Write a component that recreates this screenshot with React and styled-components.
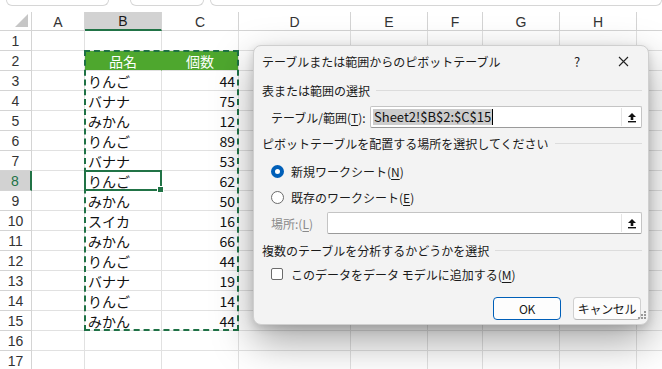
import React from 'react'
import styled, { createGlobalStyle } from 'styled-components'

const GlobalStyle = createGlobalStyle`
  html, body { margin: 0; padding: 0; background: #fff; overflow: hidden; }
  body { font-family: "Noto Sans CJK JP", "Noto Sans", sans-serif; }
`

const COLS = [
  { name: '', w: 32 },
  { name: 'A', w: 53 },
  { name: 'B', w: 77 },
  { name: 'C', w: 77 },
  { name: 'D', w: 112 },
  { name: 'E', w: 77 },
  { name: 'F', w: 55 },
  { name: 'G', w: 77 },
  { name: 'H', w: 77 },
  { name: '', w: 40 },
]

const DATA = [
  ['りんご', 44], ['バナナ', 75], ['みかん', 12], ['りんご', 89], ['バナナ', 53],
  ['りんご', 62], ['みかん', 50], ['スイカ', 16], ['みかん', 66], ['りんご', 44],
  ['バナナ', 19], ['りんご', 14], ['みかん', 44],
]

const green = '#217346'
const gridLine = '#e1e1e1'

const Page = styled.div`
  position: relative;
  width: 662px;
  height: 369px;
  overflow: hidden;
`

const TopStrip = styled.div`
  display: flex;
  height: 12px;
  gap: 6px;
  padding-left: 6px;
  align-items: flex-end;
  padding-bottom: 6px;
  box-sizing: border-box;
`

const BarBox = styled.div`
  width: ${p => p.$w}px;
  flex: ${p => (p.$grow ? 1 : 'none')};
  height: 14px;
  margin-top: -10px;
  border: 1px solid #d6d6d6;
  border-top: none;
  border-radius: 0 0 6px 6px;
  margin-left: ${p => p.$ml || 0}px;
`

const Sheet = styled.div`
  display: grid;
  grid-template-columns: ${COLS.map(c => c.w + 'px').join(' ')};
  grid-template-rows: 19px repeat(17, 20px);
  font-family: "Noto Sans CJK JP", sans-serif;
`

const ColHead = styled.div`
  grid-row: 1;
  grid-column: ${p => p.$c};
  box-sizing: border-box;
  border-right: 1px solid #d4d4d4;
  border-bottom: ${p => (p.$sel ? `2px solid ${green}` : '1px solid #d4d4d4')};
  background: ${p => (p.$sel ? '#d2d2d2' : '#fff')};
  font-family: "Liberation Sans", sans-serif;
  font-size: 14px;
  color: ${p => (p.$sel ? '#1a1a1a' : '#333')};
  display: flex;
  align-items: center;
  justify-content: center;
  padding-top: 1px;
`

const Corner = styled(ColHead)`
  position: relative;
  &::after {
    content: '';
    position: absolute;
    right: 3px;
    bottom: 3px;
    border-style: solid;
    border-width: 0 0 13px 13px;
    border-color: transparent transparent #c6c6c6 transparent;
  }
`

const RowHead = styled.div`
  grid-row: ${p => p.$r};
  grid-column: 1;
  box-sizing: border-box;
  border-right: ${p => (p.$sel ? `2px solid ${green}` : '1px solid #d4d4d4')};
  border-bottom: 1px solid #d4d4d4;
  background: ${p => (p.$sel ? '#d2d2d2' : '#fff')};
  font-family: "Liberation Sans", sans-serif;
  font-size: 14px;
  color: ${p => (p.$sel ? green : '#333')};
  display: flex;
  align-items: center;
  justify-content: center;
`

const Cell = styled.div`
  grid-row: ${p => p.$r};
  grid-column: ${p => p.$c};
  box-sizing: border-box;
  border-right: 1px solid ${p => (p.$head ? p.$headColor : gridLine)};
  border-bottom: 1px solid ${gridLine};
  background: ${p => (p.$head ? '#4ea72e' : '#fff')};
  color: ${p => (p.$head ? '#fff' : '#111')};
  font-size: 14px;
  display: flex;
  align-items: center;
  justify-content: ${p => (p.$align === 'right' ? 'flex-end' : p.$align === 'center' ? 'center' : 'flex-start')};
  padding: 0 3px;
  white-space: nowrap;
  overflow: hidden;
`

const Marquee = styled.div`
  grid-column: 3 / 5;
  grid-row: 3 / 17;
  margin: -1px 0 0 -1px;
  border: 2px dashed #1e7145;
  pointer-events: none;
  z-index: 2;
`

const ActiveCell = styled.div`
  grid-column: 3;
  grid-row: 9;
  margin: -1px 0 0 -1px;
  border: 2px solid ${green};
  position: relative;
  z-index: 3;
  &::after {
    content: '';
    position: absolute;
    right: -4px;
    bottom: -4px;
    width: 5px;
    height: 5px;
    background: ${green};
    border: 1px solid #fff;
  }
`

const Dialog = styled.div`
  position: absolute;
  left: 253px;
  top: 45px;
  width: 396px;
  height: 280px;
  box-sizing: border-box;
  background: #f3f3f3;
  border: 1px solid #cfcfcf;
  border-radius: 8px;
  box-shadow: 0 16px 40px rgba(0, 0, 0, 0.36), 0 3px 8px rgba(0, 0, 0, 0.14);
  font-family: "Noto Sans CJK JP", sans-serif;
  font-size: 12px;
  color: #1a1a1a;
  z-index: 10;
  display: flex;
  flex-direction: column;
`

const TitleBar = styled.div`
  height: 30px;
  display: flex;
  align-items: center;
  padding: 0 0 0 8px;
  flex: none;
`

const TitleText = styled.div`
  flex: 1;
`

const TitleBtn = styled.div`
  width: 46px;
  display: flex;
  justify-content: center;
  font-size: 13px;
  color: #222;
  margin-right: ${p => p.$mr || 0}px;
`

const Body = styled.div`
  padding: 0 6px 0 8px;
  display: flex;
  flex-direction: column;
`

const Section = styled.div`
  display: flex;
  align-items: center;
  gap: 6px;
  height: 18px;
  white-space: nowrap;
  margin-top: ${p => p.$mt}px;
  &::after {
    content: '';
    flex: 1;
    height: 1px;
    background: #dcdcdc;
  }
`

const Row = styled.div`
  display: flex;
  align-items: center;
  padding-left: ${p => p.$pl || 9}px;
  margin-top: ${p => p.$mt}px;
  height: ${p => p.$h || 22}px;
  white-space: nowrap;
`

const Label = styled.div`
  width: ${p => p.$w}px;
  flex: none;
  white-space: nowrap;
  color: ${p => (p.$dim ? '#8a8a8a' : '#1a1a1a')};
`

const U = styled.span`
  text-decoration: underline;
  text-underline-offset: 2px;
`

const Input = styled.div`
  flex: 1;
  height: 22px;
  box-sizing: border-box;
  background: #fff;
  border: 1px solid #c4c4c4;
  border-bottom-color: #9a9a9a;
  border-radius: 2px;
  display: flex;
  align-items: center;
  padding-left: 2px;
  font-size: 13px;
`

const Selected = styled.span`
  background: #cccccc;
  color: #111;
  padding: 0 1px;
  line-height: 16px;
  border-right: 1.5px solid #000;
`

const CollapseBtn = styled.div`
  margin-left: auto;
  width: 19px;
  height: 18px;
  display: flex;
  align-items: center;
  justify-content: center;
  border-left: 1px solid #e4e4e4;
`

const Radio = styled.div`
  width: 13px;
  height: 13px;
  box-sizing: border-box;
  border-radius: 50%;
  border: ${p => (p.$on ? '4px solid #005fb8' : '1px solid #6b6b6b')};
  background: #fff;
  margin-right: 7px;
  flex: none;
`

const Check = styled.div`
  width: 12px;
  height: 12px;
  box-sizing: border-box;
  border: 1px solid #6b6b6b;
  border-radius: 2px;
  background: #fff;
  margin-right: 8px;
  flex: none;
`

const Buttons = styled.div`
  display: flex;
  justify-content: flex-end;
  gap: 12px;
  margin-top: 12px;
  padding-right: 1px;
`

const Button = styled.div`
  width: 68px;
  height: 23px;
  box-sizing: border-box;
  border-radius: 4px;
  background: #fdfdfd;
  border: 1px solid ${p => (p.$primary ? '#005fb8' : '#d0d0d0')};
  border-bottom-color: ${p => (p.$primary ? '#005fb8' : '#b8b8b8')};
  display: flex;
  align-items: center;
  justify-content: center;
  font-size: 12px;
  letter-spacing: -0.3px;
  white-space: nowrap;
`

const Grip = styled.div`
  position: absolute;
  right: 2px;
  bottom: 2px;
`

function UpIcon() {
  return (
    <svg width="10" height="11" viewBox="0 0 10 11">
      <path d="M5 1 L9 5 H6.3 V8 H3.7 V5 H1 Z" fill="#111" />
      <rect x="1" y="9" width="8" height="1.4" fill="#111" />
    </svg>
  )
}

function GripIcon() {
  return (
    <svg width="8" height="8" viewBox="0 0 8 8">
      {[[6, 0], [6, 3], [3, 3], [6, 6], [3, 6], [0, 6]].map(([x, y], i) => (
        <rect key={i} x={x} y={y} width="2" height="2" fill="#9a9a9a" />
      ))}
    </svg>
  )
}

function CloseIcon() {
  return (
    <svg width="11" height="11" viewBox="0 0 11 11">
      <path d="M1 1 L10 10 M10 1 L1 10" stroke="#222" strokeWidth="1.1" />
    </svg>
  )
}

function SheetGrid() {
  const cells = []
  COLS.forEach((c, i) => {
    if (i === 0) cells.push(<Corner key="corner" $c={1} />)
    else cells.push(<ColHead key={'h' + i} $c={i + 1} $sel={c.name === 'B'}>{c.name}</ColHead>)
  })
  for (let r = 1; r <= 17; r++) {
    cells.push(<RowHead key={'r' + r} $r={r + 1} $sel={r === 8}>{r}</RowHead>)
    for (let c = 1; c < COLS.length; c++) {
      let text = ''
      let align = 'left'
      let head = false
      if (r === 2 && (c === 2 || c === 3)) {
        head = true
        align = 'center'
        text = c === 2 ? '品名' : '個数'
      } else if (r >= 3 && r <= 15) {
        const d = DATA[r - 3]
        if (c === 2) text = d[0]
        if (c === 3) { text = d[1]; align = 'right' }
      }
      cells.push(
        <Cell
          key={r + '-' + c}
          $r={r + 1}
          $c={c + 1}
          $head={head}
          $headColor={c === 2 ? '#4ea72e' : gridLine}
          $align={align}
        >
          {text}
        </Cell>
      )
    }
  }
  return (
    <Sheet>
      {cells}
      <Marquee />
      <ActiveCell />
    </Sheet>
  )
}

export default function App() {
  return (
    <Page>
      <GlobalStyle />
      <TopStrip>
        <BarBox $w={101} />
        <BarBox $w={72} $ml={15} />
        <BarBox $grow />
      </TopStrip>
      <SheetGrid />
      <Dialog>
        <TitleBar>
          <TitleText>テーブルまたは範囲からのピボットテーブル</TitleText>
          <TitleBtn>?</TitleBtn>
          <TitleBtn $mr={2}><CloseIcon /></TitleBtn>
        </TitleBar>
        <Body>
          <Section $mt={5}>表または範囲の選択</Section>
          <Row $mt={7}>
            <Label $w={99}>テーブル/範囲(<U>T</U>):</Label>
            <Input>
              <Selected>Sheet2!$B$2:$C$15</Selected>
              <CollapseBtn><UpIcon /></CollapseBtn>
            </Input>
          </Row>
          <Section $mt={6}>ピボットテーブルを配置する場所を選択してください</Section>
          <Row $mt={8} $h={22}>
            <Radio $on />新規ワークシート(<U>N</U>)
          </Row>
          <Row $mt={4} $h={22}>
            <Radio />既存のワークシート(<U>E</U>)
          </Row>
          <Row $mt={4}>
            <Label $w={56} $dim>場所:(<U>L</U>)</Label>
            <Input>
              <CollapseBtn><UpIcon /></CollapseBtn>
            </Input>
          </Row>
          <Section $mt={7}>複数のテーブルを分析するかどうかを選択</Section>
          <Row $mt={4} $h={22}>
            <Check />このデータをデータ モデルに追加する(<U>M</U>)
          </Row>
          <Buttons>
            <Button $primary>OK</Button>
            <Button>キャンセル</Button>
          </Buttons>
        </Body>
        <Grip><GripIcon /></Grip>
      </Dialog>
    </Page>
  )
}
